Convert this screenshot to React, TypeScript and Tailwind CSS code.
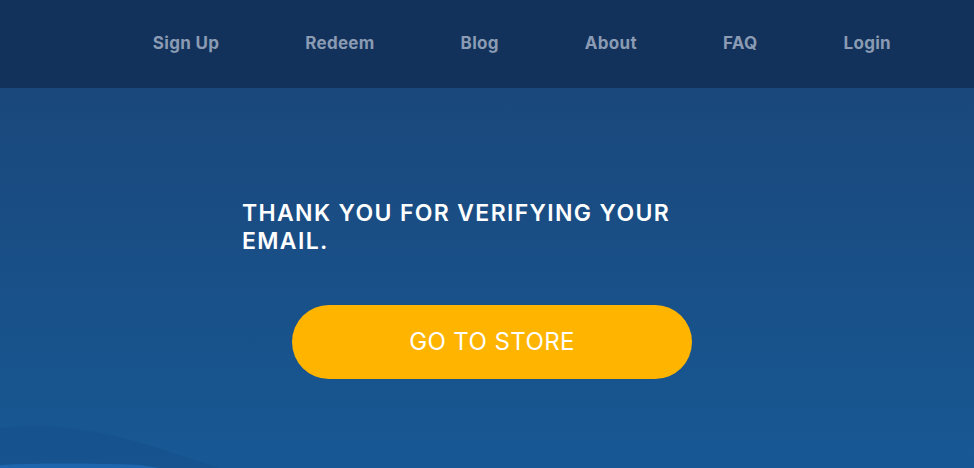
export default function App() {
  const links = ['Sign Up', 'Redeem', 'Blog', 'About', 'FAQ', 'Login']

  return (
    <div className="relative h-[468px] w-full overflow-hidden bg-gradient-to-b from-[#1a4476] to-[#175894] font-['Inter',sans-serif]">
      {/* top nav */}
      <nav className="flex h-[88px] items-center justify-end gap-[86px] bg-[#12325b] pr-[83px]">
        {links.map((l) => (
          <a key={l} href="#" className="text-[17px] font-bold tracking-[0.3px] text-[#8a9bb3]">
            {l}
          </a>
        ))}
      </nav>

      {/* content */}
      <div className="ml-[242px] w-[500px] pt-[111px]">
        <h1 className="text-[23px] font-semibold leading-[28px] tracking-[1.35px] text-white">
          THANK YOU FOR VERIFYING YOUR EMAIL.
        </h1>
        <div className="mt-[50px] flex justify-center">
          <button className="h-[74px] w-[400px] rounded-full bg-[#ffb400] text-[24px] font-normal tracking-[0.4px] text-white">
            GO TO STORE
          </button>
        </div>
      </div>

      {/* wave at bottom left */}
      <svg className="absolute bottom-0 left-0" width="974" height="60" viewBox="0 0 974 60" fill="none">
        <path d="M0 20 C60 14 110 24 170 44 L220 60 L0 60 Z" fill="#15508a" opacity="0.55" />
        <path d="M0 60 L0 57 C40 55 90 55 140 57 L160 60 Z" fill="#1d66ad" />
      </svg>
    </div>
  )
}
